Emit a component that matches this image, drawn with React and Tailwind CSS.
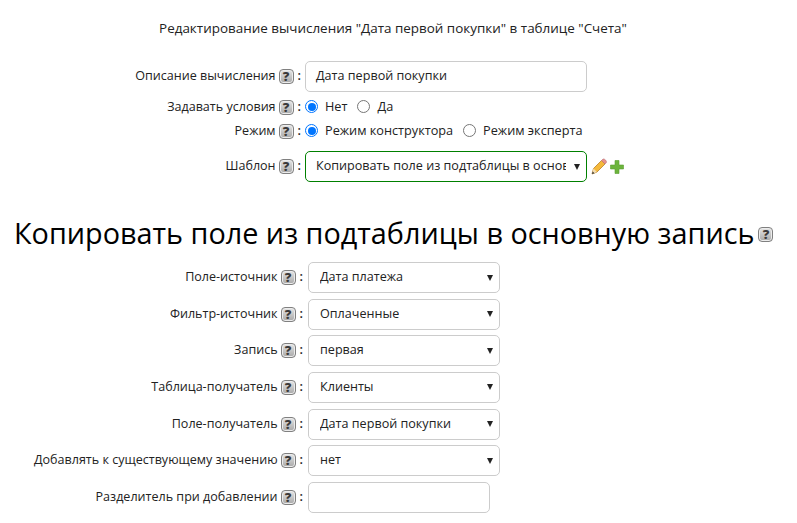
const font = { fontFamily: '"Open Sans", sans-serif' };

function Help() {
  return (
    <span className="inline-flex w-[15px] h-[15px] shrink-0 items-center justify-center rounded-[4px] border border-[#808080] bg-gradient-to-b from-[#e6e6e6] to-[#a8a8a8] shadow-[inset_0_0_0_1px_#ececec] text-[13px] leading-none font-extrabold text-[#3a3a3a]">
      ?
    </span>
  );
}

function Label({ text, width }) {
  return (
    <div className={`flex items-center justify-end gap-[3px] shrink-0 text-[12.55px] text-[#222] ${width}`}>
      <span>{text}</span>
      <Help />
      <span className="ml-[1px] font-semibold">:</span>
    </div>
  );
}

function Radio({ checked }) {
  return (
    <span className={`inline-block w-[13px] h-[13px] rounded-full border bg-white ${checked ? 'border-[#0075ff] p-[1.5px]' : 'border-[#767676]'}`}>
      {checked && <span className="block w-full h-full rounded-full bg-[#0075ff]" />}
    </span>
  );
}

function Caret() {
  return <span className="absolute right-[6px] top-1/2 -translate-y-1/2 w-0 h-0 border-x-[3.5px] border-x-transparent border-t-[6px] border-t-[#222]" />;
}

function Select({ value, green, width, inset }) {
  return (
    <div className={`relative flex items-center h-[31px] rounded-[5px] border bg-white pr-[20px] overflow-hidden whitespace-nowrap text-[12.6px] text-[#222] ${green ? 'border-[#008000]' : 'border-[#ccc]'} ${inset} ${width}`}>
      <span className="overflow-hidden">{value}</span>
      <Caret />
    </div>
  );
}

function PencilIcon() {
  return (
    <svg width="16" height="17" viewBox="0 0 16 17">
      <path d="M1 16 L2.5 10.5 L10.5 2.5 L14 6 L6 14 Z" fill="#f5b93a" stroke="#b9802a" strokeWidth="0.8" />
      <path d="M10.5 2.5 L12 1 Q13 0.5 14.5 2 Q16 3.5 15.3 4.7 L14 6 Z" fill="#e8928c" stroke="#b9707a" strokeWidth="0.6" />
      <path d="M1 16 L2.5 10.5 L6 14 Z" fill="#f2dcb0" />
      <path d="M1 16 L1.7 13.5 L3.5 15.2 Z" fill="#333" />
    </svg>
  );
}

function PlusIcon() {
  return (
    <svg width="14" height="14" viewBox="0 0 14 14">
      <path d="M5 0.5 H9 V5 H13.5 V9 H9 V13.5 H5 V9 H0.5 V5 H5 Z" fill="#6cb43c" stroke="#5a9e30" strokeWidth="0.6" />
    </svg>
  );
}

const fields = [
  { label: 'Поле-источник', value: 'Дата платежа' },
  { label: 'Фильтр-источник', value: 'Оплаченные' },
  { label: 'Запись', value: 'первая' },
  { label: 'Таблица-получатель', value: 'Клиенты' },
  { label: 'Поле-получатель', value: 'Дата первой покупки' },
  { label: 'Добавлять к существующему значению', value: 'нет' },
];

export default function App() {
  return (
    <div className="w-[797px] h-[523px] overflow-hidden bg-white text-[12.6px] text-[#222]" style={font}>
      <div className="pt-[18px] pr-[11px] text-center text-[13.45px] leading-[20px]">
        Редактирование вычисления "Дата первой покупки" в таблице "Счета"
      </div>

      <div className="mt-[23px] flex flex-col">
        <div className="flex items-center gap-[4px]">
          <Label text="Описание вычисления" width="w-[301px]" />
          <div className="flex items-center w-[282px] h-[31px] rounded-[5px] border border-[#ccc] pl-[10px]">Дата первой покупки</div>
        </div>
        <div className="mt-[5px] flex items-center gap-[4px] h-[20px]">
          <Label text="Задавать условия" width="w-[301px]" />
          <div className="flex items-center text-[12.7px]">
            <Radio checked />
            <span className="ml-[7px]">Нет</span>
            <span className="ml-[10px] flex"><Radio /></span>
            <span className="ml-[7px]">Да</span>
          </div>
        </div>
        <div className="mt-[4px] flex items-center gap-[4px] h-[20px]">
          <Label text="Режим" width="w-[301px]" />
          <div className="flex items-center text-[12.7px]">
            <Radio checked />
            <span className="ml-[7px]">Режим конструктора</span>
            <span className="ml-[10px] flex"><Radio /></span>
            <span className="ml-[7px]">Режим эксперта</span>
          </div>
        </div>
        <div className="mt-[10px] flex items-center gap-[4px]">
          <Label text="Шаблон" width="w-[301px]" />
          <Select value="Копировать поле из подтаблицы в основную запись" green width="w-[282px]" inset="pl-[10px]" />
          <div className="flex items-center gap-[3px]">
            <PencilIcon />
            <PlusIcon />
          </div>
        </div>
      </div>

      <div className="mt-[29px] flex items-center pl-[14px] h-[44px]">
        <span className="text-[28.8px] leading-none text-[#000] whitespace-nowrap">Копировать поле из подтаблицы в основную запись</span>
        <span className="ml-[4px] mt-[3px] flex"><Help /></span>
      </div>

      <div className="mt-[7px] flex flex-col gap-[5.67px]">
        {fields.map((f) => (
          <div key={f.label} className="flex items-center gap-[5px]">
            <Label text={f.label} width="w-[303px]" />
            <Select value={f.value} width="w-[192px]" inset="pl-[11px]" />
          </div>
        ))}
        <div className="flex items-center gap-[5px]">
          <Label text="Разделитель при добавлении" width="w-[303px]" />
          <div className="w-[182px] h-[31px] rounded-[5px] border border-[#ccc]" />
        </div>
      </div>
    </div>
  );
}
